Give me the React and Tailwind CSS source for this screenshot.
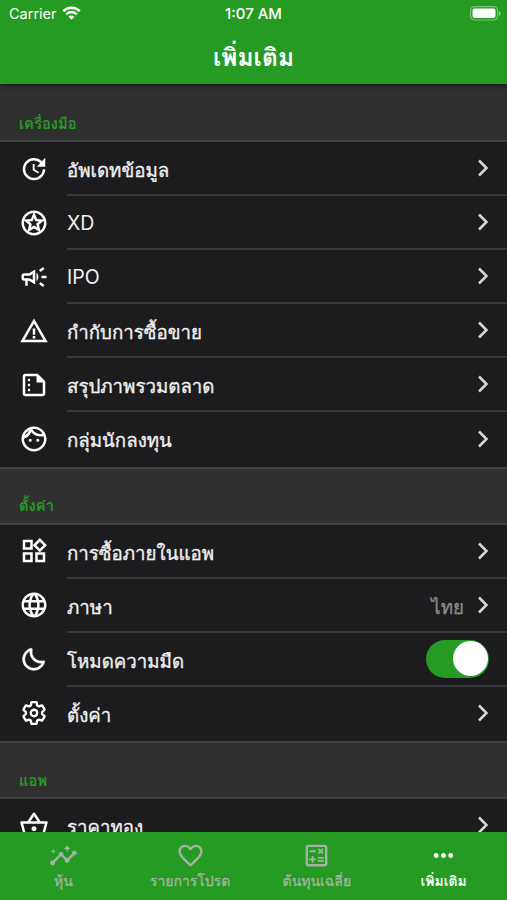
import clsx from "clsx";
import {
  MdUpdate,
  MdOutlineStars,
  MdOutlineCampaign,
  MdWarningAmber,
  MdOutlineSummarize,
  MdOutlineFace,
  MdOutlineWidgets,
  MdLanguage,
  MdOutlineShoppingBasket,
  MdInsights,
  MdFavoriteBorder,
  MdOutlineCalculate,
  MdMoreHoriz,
} from "react-icons/md";
import { BiMoon } from "react-icons/bi";
import { IoSettingsOutline } from "react-icons/io5";

const sections = [
  {
    title: "เครื่องมือ",
    rows: [
      { icon: MdUpdate, label: "อัพเดทข้อมูล" },
      { icon: MdOutlineStars, label: "XD", latin: true },
      { icon: MdOutlineCampaign, label: "IPO", latin: true },
      { icon: MdWarningAmber, label: "กำกับการซื้อขาย" },
      { icon: MdOutlineSummarize, label: "สรุปภาพรวมตลาด" },
      { icon: MdOutlineFace, label: "กลุ่มนักลงทุน" },
    ],
  },
  {
    title: "ตั้งค่า",
    rows: [
      { icon: MdOutlineWidgets, label: "การซื้อภายในแอพ" },
      { icon: MdLanguage, label: "ภาษา", value: "ไทย" },
      { icon: BiMoon, label: "โหมดความมืด", toggle: true, iconClass: "size-[27px] stroke-white [stroke-width:0.4px]" },
      { icon: IoSettingsOutline, label: "ตั้งค่า", iconClass: "size-[26px] [&_path]:[stroke-width:46px]" },
    ],
  },
  {
    title: "แอพ",
    rows: [{ icon: MdOutlineShoppingBasket, label: "ราคาทอง" }],
  },
];

const tabs = [
  { icon: MdInsights, label: "หุ้น" },
  { icon: MdFavoriteBorder, label: "รายการโปรด" },
  { icon: MdOutlineCalculate, label: "ต้นทุนเฉลี่ย" },
  { icon: MdMoreHoriz, label: "เพิ่มเติม", active: true },
];

function StatusBar() {
  return (
    <div className="grid h-7 grid-cols-3 items-center pr-[6px] pl-[9px] font-['Inter','Liberation_Sans',sans-serif] text-[14.5px] text-white">
      <div className="flex items-center gap-[6px]">
        <span>Carrier</span>
        <svg width="19" height="14" viewBox="0 0 19 14" fill="none" className="-ml-[1px] -mt-[2px]">
          <path d="M1.2 5.1a11.8 11.8 0 0 1 16.6 0" stroke="white" strokeWidth="2.6" />
          <path d="M4.2 8.3a7.5 7.5 0 0 1 10.6 0" stroke="white" strokeWidth="2.5" />
          <path d="M9.5 13.8 6.5 10.8a4.2 4.2 0 0 1 6 0Z" fill="white" />
        </svg>
      </div>
      <span className="-ml-[3px] text-center text-[15px] font-medium">1:07 AM</span>
      <svg className="-mt-[2px] justify-self-end" width="31" height="15" viewBox="0 0 31 15">
        <rect x="0.6" y="0.6" width="27" height="13.4" rx="4" fill="none" stroke="white" strokeOpacity="0.4" strokeWidth="1.2" />
        <rect x="2.5" y="2.5" width="23" height="9.6" rx="2.3" fill="white" />
        <path d="M29 5v5c1-.4 1.6-1.3 1.6-2.5S30 5.4 29 5Z" fill="white" fillOpacity="0.5" />
      </svg>
    </div>
  );
}

function Chevron() {
  return (
    <svg width="12" height="18" viewBox="0 0 12 18" fill="none" className="mr-[18px] shrink-0">
      <path d="M2 1.5 9.5 9 2 16.5" stroke="#d6d6d7" strokeWidth="2.5" />
    </svg>
  );
}

function Row({ row, last }) {
  const Icon = row.icon;
  return (
    <div className="flex h-[54.1px] shrink-0 bg-[#1c1c1e]">
      <div className="flex w-[67px] shrink-0 items-center justify-center pb-[1px]">
        <Icon className={clsx("text-white", row.iconClass || "size-[30px]")} />
      </div>
      <div className={clsx("flex flex-1 items-center border-b-2", last ? "border-transparent" : "border-[#38383a]")}>
        <span
          className={clsx(
            "flex-1 whitespace-nowrap text-[#f0f0f0]",
            row.latin ? "pt-[2px] text-[19.5px]" : "pt-[6px] text-[18.7px] [-webkit-text-stroke:0.35px]"
          )}
        >
          {row.label}
        </span>
        {row.value && (
          <span className="mr-[13px] pt-[6px] text-[18.7px] text-[#8b8b8d] [-webkit-text-stroke:0.3px]">{row.value}</span>
        )}
        {row.toggle ? (
          <div className="mr-[18px] flex h-[38px] w-[63px] items-center justify-end rounded-full bg-[#259b24] pr-[1px]">
            <div className="size-[35px] rounded-full bg-white" />
          </div>
        ) : (
          <Chevron />
        )}
      </div>
    </div>
  );
}

export default function App() {
  return (
    <div className="flex h-[900px] w-[507px] flex-col overflow-hidden bg-[#1c1c1e] font-['Inter','Loma','FreeSans','Noto_Sans',sans-serif]">
      <header className="z-10 h-[84px] shrink-0 bg-[#259b24] shadow-[0_1px_5px_rgba(0,0,0,0.7)]">
        <StatusBar />
        <h1 className="pt-[1px] text-center text-[24.5px] leading-[56px] font-bold text-white">เพิ่มเติม</h1>
      </header>
      <main className="flex flex-1 flex-col overflow-hidden">
        {sections.map((section, s) => (
          <section key={section.title} className="shrink-0">
            <div
              className={clsx(
                "flex h-[58px] items-end border-b-2 border-[#414143] bg-[#303030] pb-[5px] pl-[19px]",
                s > 0 && "border-t-2"
              )}
            >
              <h2 className="text-[14.8px] font-semibold text-[#259b24]">{section.title}</h2>
            </div>
            {section.rows.map((row, i) => (
              <Row key={row.label} row={row} last={i === section.rows.length - 1} />
            ))}
          </section>
        ))}
      </main>
      <nav className="grid h-[68px] shrink-0 grid-cols-4 bg-[#259b24]">
        {tabs.map(({ icon: Icon, label, active }) => (
          <div key={label} className={clsx("flex flex-col items-center pt-[9px]", active ? "text-white" : "text-[#a3b3a1]")}>
            <Icon className="size-[29px]" />
            <span
              className={clsx(
                "text-[14px] leading-[22px] whitespace-nowrap",
                active ? "font-bold" : "[-webkit-text-stroke:0.3px]"
              )}
            >
              {label}
            </span>
          </div>
        ))}
      </nav>
    </div>
  );
}
